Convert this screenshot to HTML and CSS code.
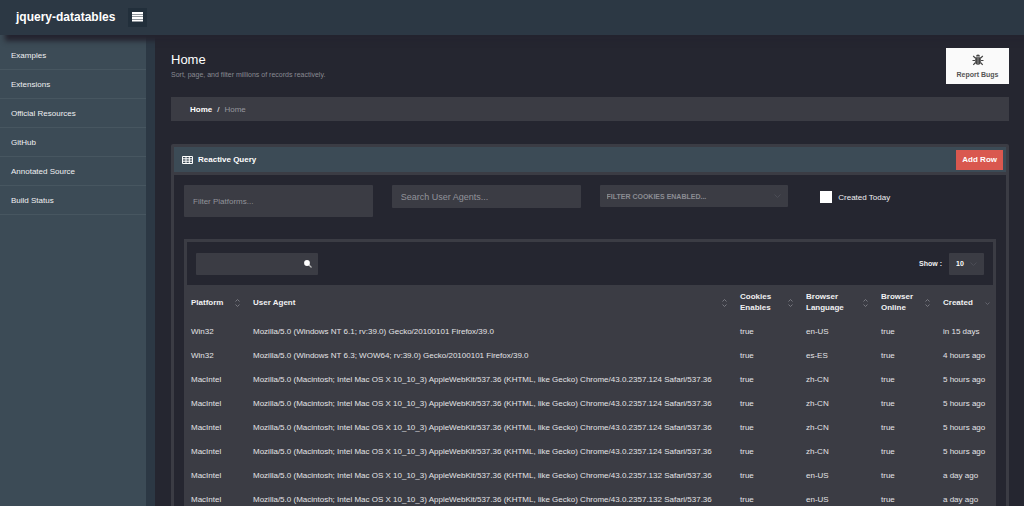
FILE: index.html
```
<!DOCTYPE html>
<html lang="en">
<head>
<meta charset="utf-8">
<title>jquery-datatables</title>
<link rel="stylesheet" href="styles.css">
</head>
<body>
<header class="topbar">
  <h1 class="brand">jquery-datatables</h1>
  <button class="menu-button" type="button" aria-label="Toggle menu">
    <svg width="11" height="10" viewBox="0 0 11 10"><path d="M0 1h11M0 3.500h11M0 6h11M0 8.500h11" stroke="#fff" stroke-width="1.800"/></svg>
  </button>
</header>
<div class="shell">
  <nav class="sidebar">
    <a href="#">Examples</a>
    <a href="#">Extensions</a>
    <a href="#">Official Resources</a>
    <a href="#">GitHub</a>
    <a href="#">Annotated Source</a>
    <a href="#">Build Status</a>
  </nav>
  <main class="main">
    <div class="page-head">
      <div>
        <h2 class="page-title">Home</h2>
        <p class="page-sub">Sort, page, and filter millions of records reactively.</p>
      </div>
      <button class="bug-button" type="button">
        <svg width="12" height="12" viewBox="0 0 12 12"><path d="M4 2.600a2 2 0 0 1 4 0z" fill="#444"/><path d="M3.200 3.200h5.600v4.300a2.800 3.200 0 0 1-5.600 0z" fill="#444"/><path d="M3.400 4.200L1.200 2M8.600 4.200L10.800 2M3 6.500H.5M9 6.500h2.500M3.500 8.500l-2.200 2.300M8.500 8.500l2.200 2.300" stroke="#444" stroke-width="1.200" fill="none"/><path d="M6 4v6" stroke="#aaa" stroke-width=".7"/></svg>
        <span>Report Bugs</span>
      </button>
    </div>
    <nav class="crumbs" aria-label="Breadcrumb"><a href="#">Home</a><span class="slash">/</span><span class="current">Home</span></nav>
    <section class="panel">
      <div class="panel-head">
        <svg width="11" height="8" viewBox="0 0 11 8"><path d="M.5.500h10v7H.5zM.5 2.800h10M.5 5.200h10M4 .5v7M7.300.500v7" stroke="#fff" fill="none"/></svg>
        <h3 class="panel-title">Reactive Query</h3>
        <button class="add-button" type="button">Add Row</button>
      </div>
      <div class="panel-body">
        <div class="filters">
          <input class="field field-tall" type="text" placeholder="Filter Platforms..." aria-label="Filter platforms">
          <input class="field field-agent" type="text" placeholder="Search User Agents..." aria-label="Search user agents">
          <div class="select-wrap">
            <select class="field field-select" aria-label="Filter cookies enabled"><option>FILTER COOKIES ENABLED...</option></select>
            <svg class="chevron" width="7" height="4" viewBox="0 0 7 4"><path d="M.5.500l3 3 3-3" stroke="#4b4c55" fill="none"/></svg>
          </div>
          <label class="check"><input type="checkbox">Created Today</label>
        </div>
        <div class="grid-box">
          <div class="toolbar">
            <div class="search">
              <input class="field" type="search" aria-label="Search">
              <svg class="lens" width="8" height="8" viewBox="0 0 8 8"><path d="M4.500 4.500l3 3" stroke="#bbb" stroke-width="1.300"/><circle cx="3" cy="3" r="2.900" fill="#fff"/></svg>
            </div>
            <label class="show">Show :
              <span class="select-wrap">
                <select class="field field-count"><option>10</option></select>
                <svg class="chevron" width="7" height="4" viewBox="0 0 7 4"><path d="M.5.500l3 3 3-3" stroke="#4b4c55" fill="none"/></svg>
              </span>
            </label>
          </div>
          <table class="data">
            <colgroup><col class="c-platform"><col><col class="c-cookies"><col class="c-lang"><col class="c-online"><col class="c-created"></colgroup>
            <thead>
              <tr>
                <th><div class="th">Platform<svg class="sort" width="5" height="8" viewBox="0 0 5 8"><path d="M.5 2.500l2-2 2 2M.5 5.500l2 2 2-2"/></svg></div></th>
                <th><div class="th">User Agent<svg class="sort" width="5" height="8" viewBox="0 0 5 8"><path d="M.5 2.500l2-2 2 2M.5 5.500l2 2 2-2"/></svg></div></th>
                <th><div class="th">Cookies<br>Enables<svg class="sort" width="5" height="8" viewBox="0 0 5 8"><path d="M.5 2.500l2-2 2 2M.5 5.500l2 2 2-2"/></svg></div></th>
                <th><div class="th">Browser<br>Language<svg class="sort" width="5" height="8" viewBox="0 0 5 8"><path d="M.5 2.500l2-2 2 2M.5 5.500l2 2 2-2"/></svg></div></th>
                <th><div class="th">Browser<br>Online<svg class="sort" width="5" height="8" viewBox="0 0 5 8"><path d="M.5 2.500l2-2 2 2M.5 5.500l2 2 2-2"/></svg></div></th>
                <th><div class="th">Created<svg class="sort sort-down" width="5" height="8" viewBox="0 0 5 8"><path d="M.5 3.500l2 2 2-2"/></svg></div></th>
              </tr>
            </thead>
            <tbody>
              <tr><td>Win32</td><td>Mozilla/5.0 (Windows NT 6.1; rv:39.0) Gecko/20100101 Firefox/39.0</td><td>true</td><td>en-US</td><td>true</td><td>in 15 days</td></tr>
              <tr><td>Win32</td><td>Mozilla/5.0 (Windows NT 6.3; WOW64; rv:39.0) Gecko/20100101 Firefox/39.0</td><td>true</td><td>es-ES</td><td>true</td><td>4 hours ago</td></tr>
              <tr><td>MacIntel</td><td>Mozilla/5.0 (Macintosh; Intel Mac OS X 10_10_3) AppleWebKit/537.36 (KHTML, like Gecko) Chrome/43.0.2357.124 Safari/537.36</td><td>true</td><td>zh-CN</td><td>true</td><td>5 hours ago</td></tr>
              <tr><td>MacIntel</td><td>Mozilla/5.0 (Macintosh; Intel Mac OS X 10_10_3) AppleWebKit/537.36 (KHTML, like Gecko) Chrome/43.0.2357.124 Safari/537.36</td><td>true</td><td>zh-CN</td><td>true</td><td>5 hours ago</td></tr>
              <tr><td>MacIntel</td><td>Mozilla/5.0 (Macintosh; Intel Mac OS X 10_10_3) AppleWebKit/537.36 (KHTML, like Gecko) Chrome/43.0.2357.124 Safari/537.36</td><td>true</td><td>zh-CN</td><td>true</td><td>5 hours ago</td></tr>
              <tr><td>MacIntel</td><td>Mozilla/5.0 (Macintosh; Intel Mac OS X 10_10_3) AppleWebKit/537.36 (KHTML, like Gecko) Chrome/43.0.2357.124 Safari/537.36</td><td>true</td><td>zh-CN</td><td>true</td><td>5 hours ago</td></tr>
              <tr><td>MacIntel</td><td>Mozilla/5.0 (Macintosh; Intel Mac OS X 10_10_3) AppleWebKit/537.36 (KHTML, like Gecko) Chrome/43.0.2357.132 Safari/537.36</td><td>true</td><td>en-US</td><td>true</td><td>a day ago</td></tr>
              <tr><td>MacIntel</td><td>Mozilla/5.0 (Macintosh; Intel Mac OS X 10_10_3) AppleWebKit/537.36 (KHTML, like Gecko) Chrome/43.0.2357.132 Safari/537.36</td><td>true</td><td>en-US</td><td>true</td><td>a day ago</td></tr>
            </tbody>
          </table>
        </div>
      </div>
    </section>
  </main>
</div>
</body>
</html>
```
FILE: styles.css
```
:root {
  --bg: #252630;
  --soft: #3b3c44;
  --bar: #2c3844;
  --slate: #3c4b56;
}
* { box-sizing: border-box; }
body {
  margin: 0;
  height: 100vh;
  display: flex;
  flex-direction: column;
  background: var(--bg);
  color: #f0f0f2;
  font: 8px/11px "Liberation Sans", Arial, sans-serif;
}
h1, h2, h3, p { margin: 0; }
a { color: inherit; text-decoration: none; }
button, input, select { font: inherit; color: inherit; border: 0; border-radius: 0; margin: 0; }
svg { display: block; flex: none; }

.topbar {
  flex: none;
  height: 35px;
  display: flex;
  align-items: center;
  gap: 13px;
  padding: 0 16px 1px;
  background: var(--bar);
  box-shadow: 5px 6px 5px #24242f;
  position: relative;
  z-index: 1;
}
.brand { font-size: 12px; line-height: 16px; color: #fff; }
.menu-button {
  width: 19px;
  height: 19px;
  padding: 0;
  display: grid;
  place-items: center;
  background: #222f3b;
}

.shell { flex: 1; min-height: 0; display: flex; }
.sidebar {
  flex: none;
  width: 155px;
  padding-top: 6px;
  background: var(--slate);
  border-right: 9px solid var(--bar);
}
.sidebar a {
  display: block;
  padding: 9px 11px 8px;
  line-height: 11px;
  border-bottom: 1px solid #475660;
}
.main {
  flex: 1;
  min-width: 0;
  overflow-y: auto;
  scrollbar-width: none;
  padding: 13px 15px 16px 16px;
}

.page-head { display: flex; justify-content: space-between; align-items: flex-start; }
.page-title { padding-top: 4px; font-size: 13px; line-height: 16px; font-weight: 400; color: #fff; }
.page-sub { font-size: 7px; line-height: 14px; color: #898a92; }
.bug-button {
  width: 63px;
  height: 36px;
  padding: 0;
  display: flex;
  flex-direction: column;
  align-items: center;
  justify-content: center;
  gap: 4px;
  background: #fafafa;
  color: #555;
  font-size: 7px;
  line-height: 9px;
  font-weight: 700;
}
.crumbs {
  display: flex;
  align-items: center;
  height: 24px;
  margin-top: 13px;
  padding: 0 19px;
  background: var(--soft);
}
.crumbs a { font-weight: 700; color: #fff; }
.slash { padding: 0 5px; }
.current { color: #96979e; }

.panel {
  margin-top: 23px;
  border: 3px solid var(--soft);
  border-radius: 2px;
}
.panel-head {
  display: flex;
  align-items: center;
  gap: 5px;
  height: 28px;
  padding: 0 3px 0 8px;
  background: var(--slate);
  border-bottom: 3px solid var(--soft);
}
.panel-title { flex: 1; font-size: 8px; line-height: 11px; color: #fff; }
.add-button {
  height: 20px;
  padding: 0 6px;
  background: #d9584f;
  color: #fff;
  font-weight: 700;
}
.panel-body { padding: 10px; }
.filters {
  display: grid;
  grid-template-columns: repeat(4, 1fr);
  gap: 19px;
  align-items: start;
}
.field { width: 100%; height: 22px; padding: 0 9px; background: var(--soft); border-radius: 1px; }
.field::placeholder { color: #92939a; opacity: 1; }
.field-tall { height: 32px; }
.field-agent { height: 23px; font-size: 9px; }
.field-select, .field-count {
  appearance: none;
  padding: 0 7px;
  font-size: 7px;
  font-weight: 700;
}
.field-select { color: #8b8c93; }
.field-count { width: 35px; color: #fff; }
.select-wrap { position: relative; display: block; }
.chevron { position: absolute; right: 7px; top: 9px; pointer-events: none; }
.check { display: flex; align-items: center; gap: 6px; padding: 6px 13px; }
.check input { appearance: none; width: 12px; height: 12px; background: #fff; }

.grid-box { margin-top: 22px; border: 3px solid var(--soft); }
.toolbar {
  display: flex;
  justify-content: space-between;
  align-items: center;
  height: 43px;
  padding: 0 9px;
}
.search { position: relative; width: 122px; }
.lens { position: absolute; right: 6px; top: 7px; }
.show { display: flex; align-items: center; gap: 7px; font-size: 7px; font-weight: 700; }

.data { width: 100%; table-layout: fixed; border-collapse: collapse; background: var(--soft); }
.c-platform, .c-online { width: 62px; }
.c-cookies { width: 66px; }
.c-lang { width: 75px; }
.c-created { width: 54px; }
.data th, .data td { padding: 0 4px; text-align: left; white-space: nowrap; }
.data th { height: 34px; }
.data td { height: 24px; color: #e3e3e6; }
.th { position: relative; }
.sort { position: absolute; right: 5px; top: calc(50% - 3px); fill: none; stroke: #85868e; stroke-width: .8; }
.sort-down { right: -1px; stroke: #6c6d76; }
```
